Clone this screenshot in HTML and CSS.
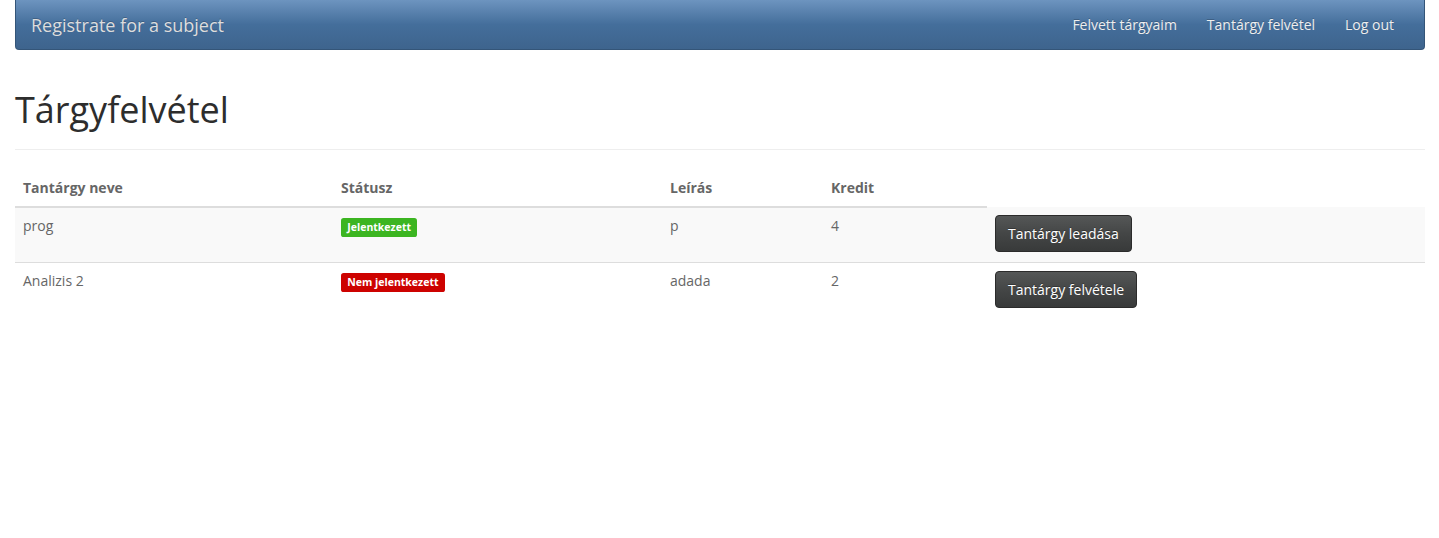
FILE: index.html
```html
<!DOCTYPE html>
<html lang="hu">
<head>
<meta charset="utf-8">
<title>Tárgyfelvétel</title>
<link rel="stylesheet" href="styles.css">
</head>
<body>
<div class="container">
  <nav class="navbar">
    <a class="brand" href="#">Registrate for a subject</a>
    <ul class="nav">
      <li><a href="#">Felvett tárgyaim</a></li>
      <li><a href="#">Tantárgy felvétel</a></li>
      <li><a href="#">Log out</a></li>
    </ul>
  </nav>
  <div class="page-header">
    <h1>Tárgyfelvétel</h1>
  </div>
  <table class="table">
    <colgroup>
      <col class="c1"><col class="c2"><col class="c3"><col class="c4"><col>
    </colgroup>
    <thead>
      <tr>
        <th>Tantárgy neve</th>
        <th>Státusz</th>
        <th>Leírás</th>
        <th>Kredit</th>
      </tr>
    </thead>
    <tbody>
      <tr class="odd">
        <td>prog</td>
        <td><span class="label label-success">Jelentkezett</span></td>
        <td>p</td>
        <td>4</td>
        <td><button class="btn">Tantárgy leadása</button></td>
      </tr>
      <tr>
        <td>Analizis 2</td>
        <td><span class="label label-danger">Nem jelentkezett</span></td>
        <td>adada</td>
        <td>2</td>
        <td><button class="btn">Tantárgy felvétele</button></td>
      </tr>
    </tbody>
  </table>
</div>
</body>
</html>
```

FILE: styles.css
```css
* { box-sizing: border-box; }
html, body { margin: 0; }
body {
  font-family: "Open Sans", "Liberation Sans", sans-serif;
  font-size: 14px;
  line-height: 20px;
  color: #666666;
  background: #ffffff;
}
.container { padding: 0 14px 0 15px; }

.navbar {
  display: flex;
  align-items: center;
  justify-content: space-between;
  height: 50px;
  padding: 0 15px;
  background-image: linear-gradient(#6d94bf, #446e9b 50%, #3e648d);
  border: 1px solid #345578;
  border-top: 0;
  border-radius: 0 0 4px 4px;
  margin-bottom: 20px;
}
.brand {
  color: #dddddd;
  font-size: 18px;
  line-height: 20px;
  text-decoration: none;
  padding: 15px 0;
  text-shadow: 0 -1px 0 rgba(0,0,0,0.2);
}
.nav {
  display: flex;
  list-style: none;
  margin: 0;
  padding: 0;
}
.nav a {
  display: block;
  padding: 15px;
  color: #eeeeee;
  text-decoration: none;
  text-shadow: 0 -1px 0 rgba(0,0,0,0.2);
}

.page-header {
  margin: 40px 0 20px;
  padding-bottom: 9px;
  border-bottom: 1px solid #eeeeee;
}
h1 {
  margin: 0 0 10px;
  font-size: 36px;
  line-height: 39.6px;
  font-weight: 400;
  color: #2d2d2d;
}

.table {
  width: 100%;
  border-collapse: collapse;
  border-spacing: 0;
}
.c1 { width: 318px; }
.c2 { width: 329px; }
.c3 { width: 161px; }
.c4 { width: 164px; }
.table th, .table td {
  padding: 8px;
  text-align: left;
  vertical-align: top;
  line-height: 20px;
}
.table th {
  font-weight: 700;
  color: #666666;
  border-bottom: 2px solid #dddddd;
  vertical-align: bottom;
}
.table td { border-top: 1px solid #dddddd; }
.table tbody tr:first-child td { border-top: 0; }
.table tr.odd td { background: #f9f9f9; }

.label {
  display: inline;
  padding: 0.2em 0.6em 0.3em;
  font-size: 75%;
  font-weight: 700;
  line-height: 1;
  color: #ffffff;
  white-space: nowrap;
  vertical-align: baseline;
  border-radius: 0.25em;
}
.label-success { background: #3cb521; }
.label-danger { background: #cd0200; }

.btn {
  display: inline-block;
  height: 37px;
  font-family: inherit;
  font-size: 14px;
  line-height: 20px;
  padding: 8px 12px 7px;
  margin: 0 0 2px;
  color: #ffffff;
  background-image: linear-gradient(#555757, #444646 50%, #383a3a);
  border: 1px solid #2b2b2b;
  border-radius: 4px;
  text-shadow: 0 -1px 0 rgba(0,0,0,0.3);
  cursor: pointer;
  vertical-align: top;
}
```
